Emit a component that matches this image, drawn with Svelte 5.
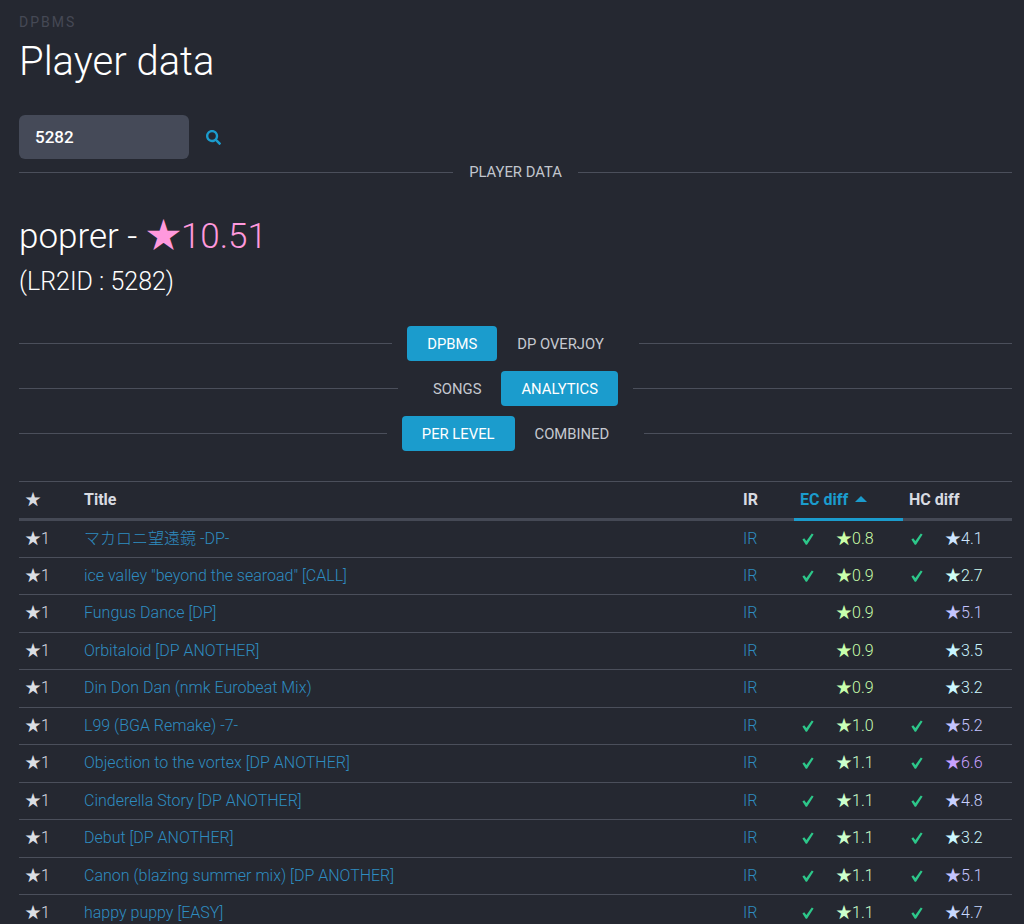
<script>
	const rows = [
		{ title: 'マカロニ望遠鏡 -DP-', ec: '0.8', ecc: '#ccffa8', ecOk: true, hc: '4.1', hcc: '#cfe6ff', hcOk: true },
		{ title: 'ice valley "beyond the searoad" [CALL]', ec: '0.9', ecc: '#c8ffac', ecOk: true, hc: '2.7', hcc: '#d0fff4', hcOk: true },
		{ title: 'Fungus Dance [DP]', ec: '0.9', ecc: '#c8ffac', hc: '5.1', hcc: '#c4c4ff' },
		{ title: 'Orbitaloid [DP ANOTHER]', ec: '0.9', ecc: '#c8ffac', hc: '3.5', hcc: '#c8f4ff' },
		{ title: 'Din Don Dan (nmk Eurobeat Mix)', ec: '0.9', ecc: '#c8ffac', hc: '3.2', hcc: '#ccf8ff' },
		{ title: 'L99 (BGA Remake) -7-', ec: '1.0', ecc: '#c8ffb8', ecOk: true, hc: '5.2', hcc: '#c4c4ff', hcOk: true },
		{ title: 'Objection to the vortex [DP ANOTHER]', ec: '1.1', ecc: '#ccffcc', ecOk: true, hc: '6.6', hcc: '#c8a0ff', hcOk: true },
		{ title: 'Cinderella Story [DP ANOTHER]', ec: '1.1', ecc: '#ccffcc', ecOk: true, hc: '4.8', hcc: '#c8d0ff', hcOk: true },
		{ title: 'Debut [DP ANOTHER]', ec: '1.1', ecc: '#ccffcc', ecOk: true, hc: '3.2', hcc: '#ccf8ff', hcOk: true },
		{ title: 'Canon (blazing summer mix) [DP ANOTHER]', ec: '1.1', ecc: '#ccffcc', ecOk: true, hc: '5.1', hcc: '#c4c4ff', hcOk: true },
		{ title: 'happy puppy [EASY]', ec: '1.1', ecc: '#ccffcc', ecOk: true, hc: '4.7', hcc: '#c8d8ff', hcOk: true }
	];

	const tabs = [
		[
			{ label: 'DPBMS', active: true },
			{ label: 'DP OVERJOY' }
		],
		[
			{ label: 'SONGS' },
			{ label: 'ANALYTICS', active: true }
		],
		[
			{ label: 'PER LEVEL', active: true },
			{ label: 'COMBINED' }
		]
	];
</script>

{#snippet check(ok)}
	<span class="check">
		{#if ok}
			<svg viewBox="0 0 12 12" width="12" height="12" aria-hidden="true">
				<path fill="currentColor" d="M0.4 6.6 L2.2 5.2 L4.4 8 L9.8 0.4 L11.6 1.4 L5 11.8 L3.8 11.8 Z" />
			</svg>
		{/if}
	</span>
{/snippet}

<div class="page">
	<p class="eyebrow">DPBMS</p>
	<h1>Player data</h1>

	<form class="search" onsubmit={(e) => e.preventDefault()}>
		<input type="text" value="5282" />
		<button type="submit" aria-label="Search">
			<svg viewBox="0 0 512 512" width="15" height="15">
				<path
					fill="currentColor"
					d="M505 442.7L405.3 343c-4.500-4.500-10.600-7-17-7H372c27.600-35.300 44-79.700 44-128C416 93.100 322.900 0 208 0S0 93.100 0 208s93.100 208 208 208c48.300 0 92.700-16.400 128-44v16.300c0 6.400 2.500 12.500 7 17l99.700 99.700c9.400 9.400 24.600 9.400 33.900 0l28.300-28.300c9.400-9.400 9.400-24.600.1-34zM208 336c-70.700 0-128-57.200-128-128 0-70.700 57.200-128 128-128 70.700 0 128 57.200 128 128 0 70.700-57.200 128-128 128z"
				/>
			</svg>
		</button>
	</form>

	<div class="divider label"><span>PLAYER DATA</span></div>

	<h2>poprer - <span class="rating"><span class="big-star">★</span>10.51</span></h2>
	<p class="lr2id">(LR2ID : 5282)</p>

	<div class="tab-groups">
		{#each tabs as group}
			<div class="divider tabs">
				<div class="tab-row">
					{#each group as tab}
						<button class="tab" class:active={tab.active}>{tab.label}</button>
					{/each}
				</div>
			</div>
		{/each}
	</div>

	<table>
		<colgroup>
			<col class="c-level" />
			<col />
			<col class="c-ir" />
			<col class="c-diff" />
			<col class="c-diff" />
		</colgroup>
		<thead>
			<tr>
				<th>★</th>
				<th>Title</th>
				<th>IR</th>
				<th class="sorted">EC diff <span class="caret"></span></th>
				<th>HC diff</th>
			</tr>
		</thead>
		<tbody>
			{#each rows as row}
				<tr>
					<td class="level">★1</td>
					<td><a href="#song">{row.title}</a></td>
					<td><a href="#ir">IR</a></td>
					<td>
						<div class="diff">
							{@render check(row.ecOk)}
							<span style="color: {row.ecc}">★{row.ec}</span>
						</div>
					</td>
					<td>
						<div class="diff">
							{@render check(row.hcOk)}
							<span style="color: {row.hcc}">★{row.hc}</span>
						</div>
					</td>
				</tr>
			{/each}
		</tbody>
	</table>
</div>

<style>
	:global(body) {
		background: #252831;
		overflow: hidden;
	}
	.page {
		height: 924px;
		overflow: hidden;
		padding: 13px 12px 0 19px;
		font-family: Roboto, 'Noto Sans CJK JP', sans-serif;
		font-weight: 300;
		font-size: 16px;
		line-height: 1.5;
		color: #dbdee4;
	}
	.eyebrow {
		margin: 0;
		font-size: 14px;
		line-height: 18px;
		font-weight: 400;
		letter-spacing: 2px;
		color: #454955;
	}
	h1 {
		margin: 7px 0 0;
		font-size: 40px;
		font-weight: 300;
		line-height: 48px;
		color: #fff;
	}
	.search {
		display: flex;
		align-items: center;
		gap: 17px;
		margin-top: 29px;
	}
	.search input {
		box-sizing: border-box;
		width: 170px;
		height: 44px;
		padding: 0 16px;
		border: 0;
		border-radius: 6px;
		background: #454a58;
		color: #fff;
		font: 500 17px Roboto, sans-serif;
	}
	.search button {
		display: flex;
		padding: 0;
		border: 0;
		background: none;
		color: #1b9ccd;
	}
	.divider {
		display: flex;
		align-items: center;
		justify-content: center;
	}
	.divider::before,
	.divider::after {
		content: '';
		flex: 1;
		height: 1px;
		background: #4b4f5b;
	}
	.label {
		gap: 16px;
		height: 27px;
		font-size: 14.8px;
		font-weight: 400;
		color: #c2c6ce;
	}
	h2 {
		margin: 29px 0 0;
		font-size: 35px;
		font-weight: 300;
		line-height: 44px;
		color: #fff;
	}
	.rating {
		color: #ff99dd;
	}
	.big-star {
		font-weight: 400;
	}
	.lr2id {
		margin: 7px 0 0;
		font-size: 25px;
		line-height: 32px;
		font-weight: 300;
		color: #fff;
	}
	.tab-groups {
		display: flex;
		flex-direction: column;
		gap: 10px;
		margin-top: 28px;
	}
	.tabs {
		gap: 15px;
	}
	.tab-row {
		display: flex;
		gap: 0;
	}
	.tab {
		height: 35px;
		padding: 0 20px;
		border: 0;
		border-radius: 4px;
		background: none;
		color: #c6c9d0;
		font: 400 14.8px Roboto, sans-serif;
	}
	.tab.active {
		background: #1b9ccd;
		color: #fff;
	}
	table {
		width: 100%;
		margin-top: 30px;
		border-collapse: collapse;
		table-layout: fixed;
		border-top: 1px solid #4b4f5b;
	}
	.c-level {
		width: 59px;
	}
	.c-ir {
		width: 57px;
	}
	.c-diff {
		width: 109px;
	}
	th {
		height: 36px;
		padding: 0 6px;
		text-align: left;
		font-size: 16px;
		font-weight: 700;
		line-height: 24px;
		color: #d8dbe1;
		border-bottom: 3px solid #454955;
	}
	th.sorted {
		color: #1b9ccd;
		border-bottom-color: #1b9ccd;
	}
	.caret {
		display: inline-block;
		margin-left: 3px;
		vertical-align: 3px;
		border: 6px solid transparent;
		border-top: 0;
		border-bottom: 6px solid #1b9ccd;
	}
	td {
		height: 37.5px;
		box-sizing: border-box;
		padding: 0 6px;
		border-bottom: 1px solid #4b4f5b;
	}
	.level {
		color: #dbdee4;
	}
	a {
		color: #2e8cc0;
		text-decoration: none;
	}
	.diff {
		display: flex;
		align-items: center;
		padding-left: 2px;
	}
	.check {
		display: flex;
		width: 34px;
		color: #2dc78a;
	}
</style>
